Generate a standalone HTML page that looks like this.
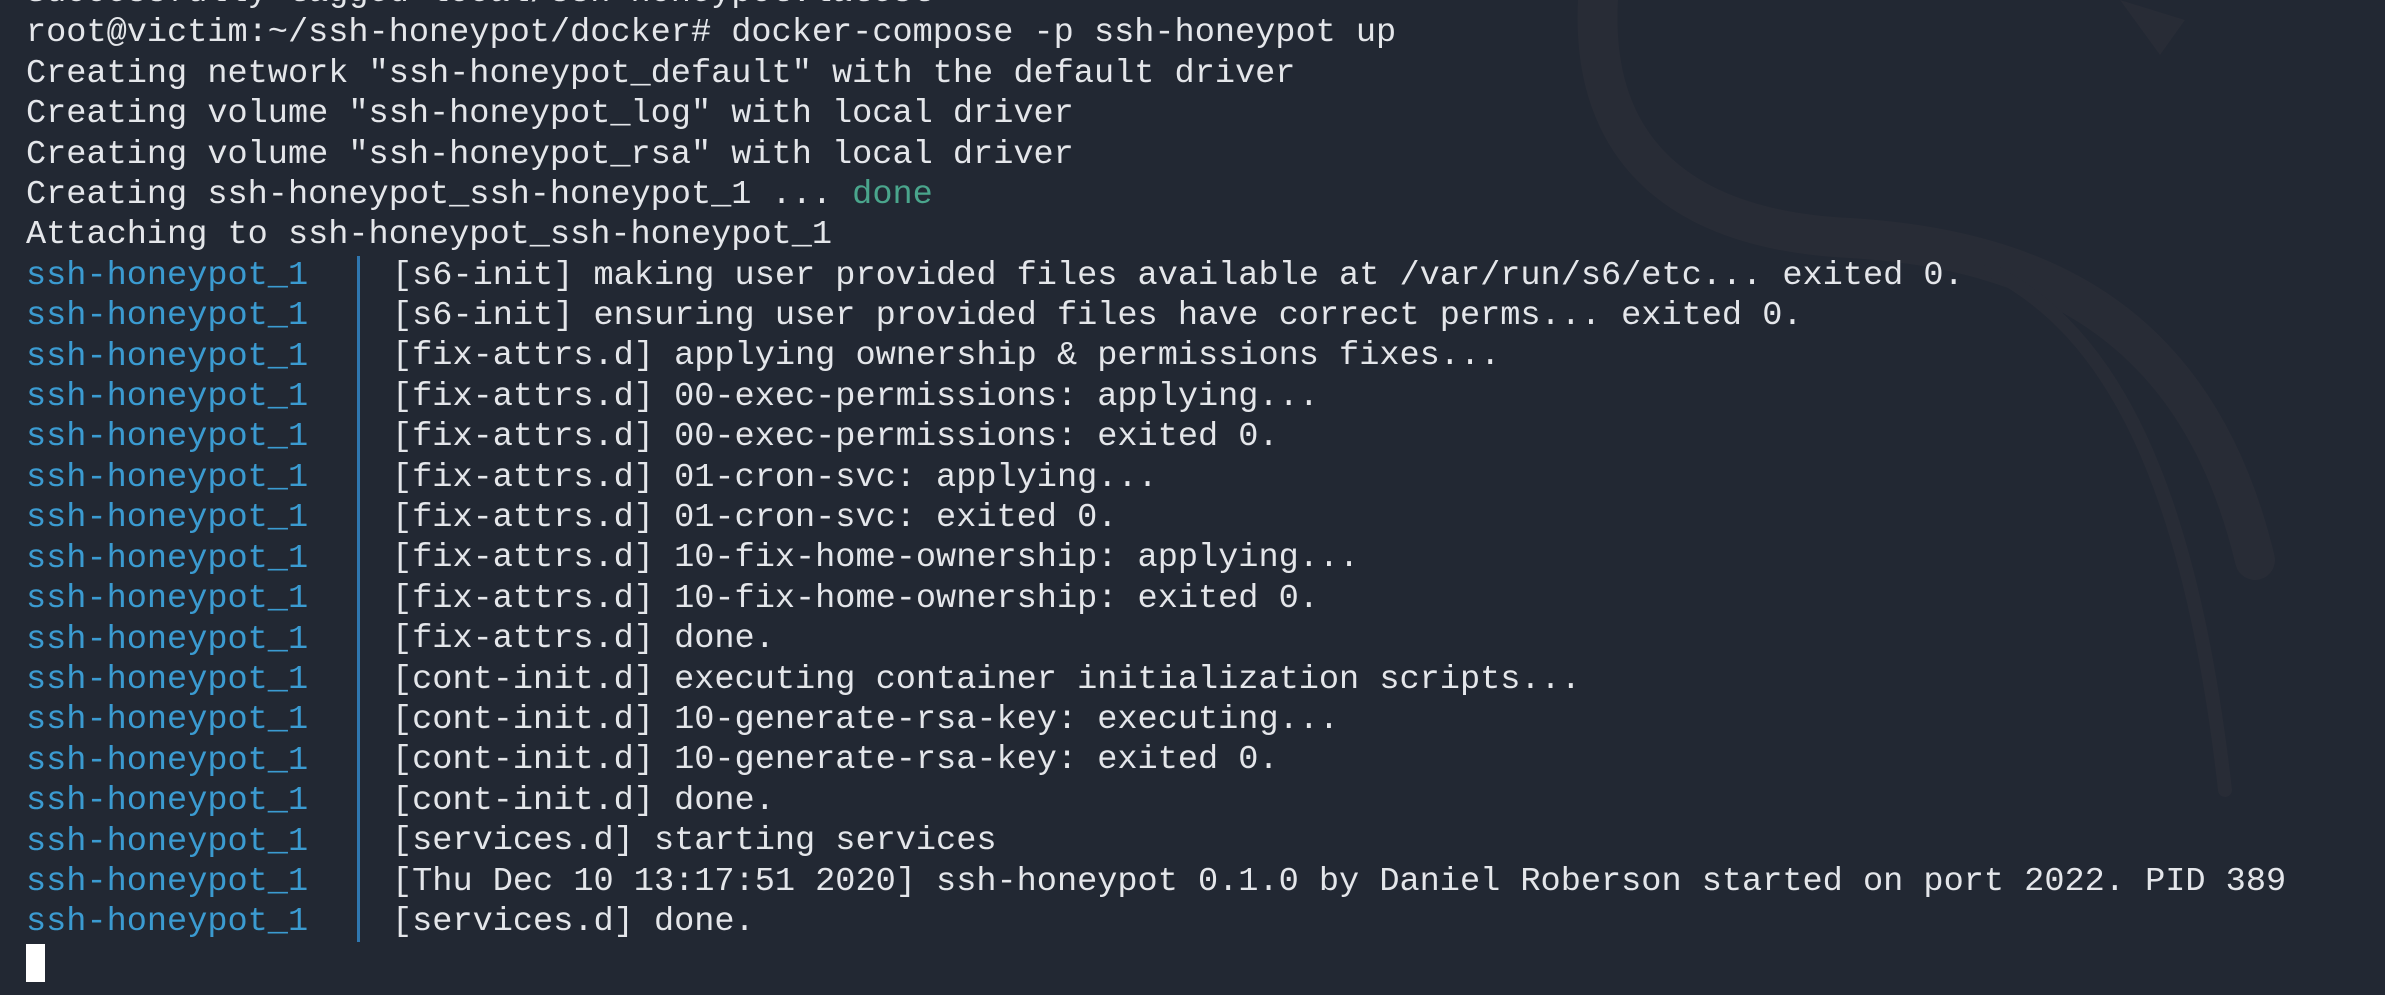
<!DOCTYPE html>
<html><head><meta charset="utf-8"><style>
html,body{margin:0;padding:0;width:2385px;height:995px;overflow:hidden;background:#222833;}
pre{position:absolute;margin:0;font-family:"Liberation Mono","DejaVu Sans Mono",monospace;font-size:33.6px;line-height:40.4px;color:#e4e6ea;white-space:pre;}
.b{color:#3b9bd1}
.g{color:#4aa58c}
</style></head><body>
<svg width="2385" height="995" style="position:absolute;left:0;top:0">
<g fill="none" stroke="#282c36" stroke-linecap="round">
<path d="M1598,0 C1590,150 1680,230 1850,238 C2050,250 2200,330 2255,560" stroke-width="40"/>
<path d="M1990,270 C2110,330 2190,480 2225,790" stroke-width="14"/>
</g>
<path d="M2120,0 L2185,20 L2160,55 Z" fill="#282c36"/>
</svg>
<pre style="left:26px;top:-27px">Successfully tagged local/ssh-honeypot:latest
root@victim:~/ssh-honeypot/docker# docker-compose -p ssh-honeypot up
Creating network "ssh-honeypot_default" with the default driver
Creating volume "ssh-honeypot_log" with local driver
Creating volume "ssh-honeypot_rsa" with local driver
Creating ssh-honeypot_ssh-honeypot_1 ... <span class="g">done</span>
Attaching to ssh-honeypot_ssh-honeypot_1
<span class="b">ssh-honeypot_1
ssh-honeypot_1
ssh-honeypot_1
ssh-honeypot_1
ssh-honeypot_1
ssh-honeypot_1
ssh-honeypot_1
ssh-honeypot_1
ssh-honeypot_1
ssh-honeypot_1
ssh-honeypot_1
ssh-honeypot_1
ssh-honeypot_1
ssh-honeypot_1
ssh-honeypot_1
ssh-honeypot_1
ssh-honeypot_1</span></pre>
<div style="position:absolute;left:357px;top:256px;width:3px;height:686px;background:#2f77b0"></div>
<pre style="left:392px;top:255.5px">[s6-init] making user provided files available at /var/run/s6/etc... exited 0.
[s6-init] ensuring user provided files have correct perms... exited 0.
[fix-attrs.d] applying ownership &amp; permissions fixes...
[fix-attrs.d] 00-exec-permissions: applying...
[fix-attrs.d] 00-exec-permissions: exited 0.
[fix-attrs.d] 01-cron-svc: applying...
[fix-attrs.d] 01-cron-svc: exited 0.
[fix-attrs.d] 10-fix-home-ownership: applying...
[fix-attrs.d] 10-fix-home-ownership: exited 0.
[fix-attrs.d] done.
[cont-init.d] executing container initialization scripts...
[cont-init.d] 10-generate-rsa-key: executing...
[cont-init.d] 10-generate-rsa-key: exited 0.
[cont-init.d] done.
[services.d] starting services
[Thu Dec 10 13:17:51 2020] ssh-honeypot 0.1.0 by Daniel Roberson started on port 2022. PID 389
[services.d] done.</pre>
<div style="position:absolute;left:26px;top:944px;width:19px;height:38px;background:#ffffff"></div>
</body></html>
